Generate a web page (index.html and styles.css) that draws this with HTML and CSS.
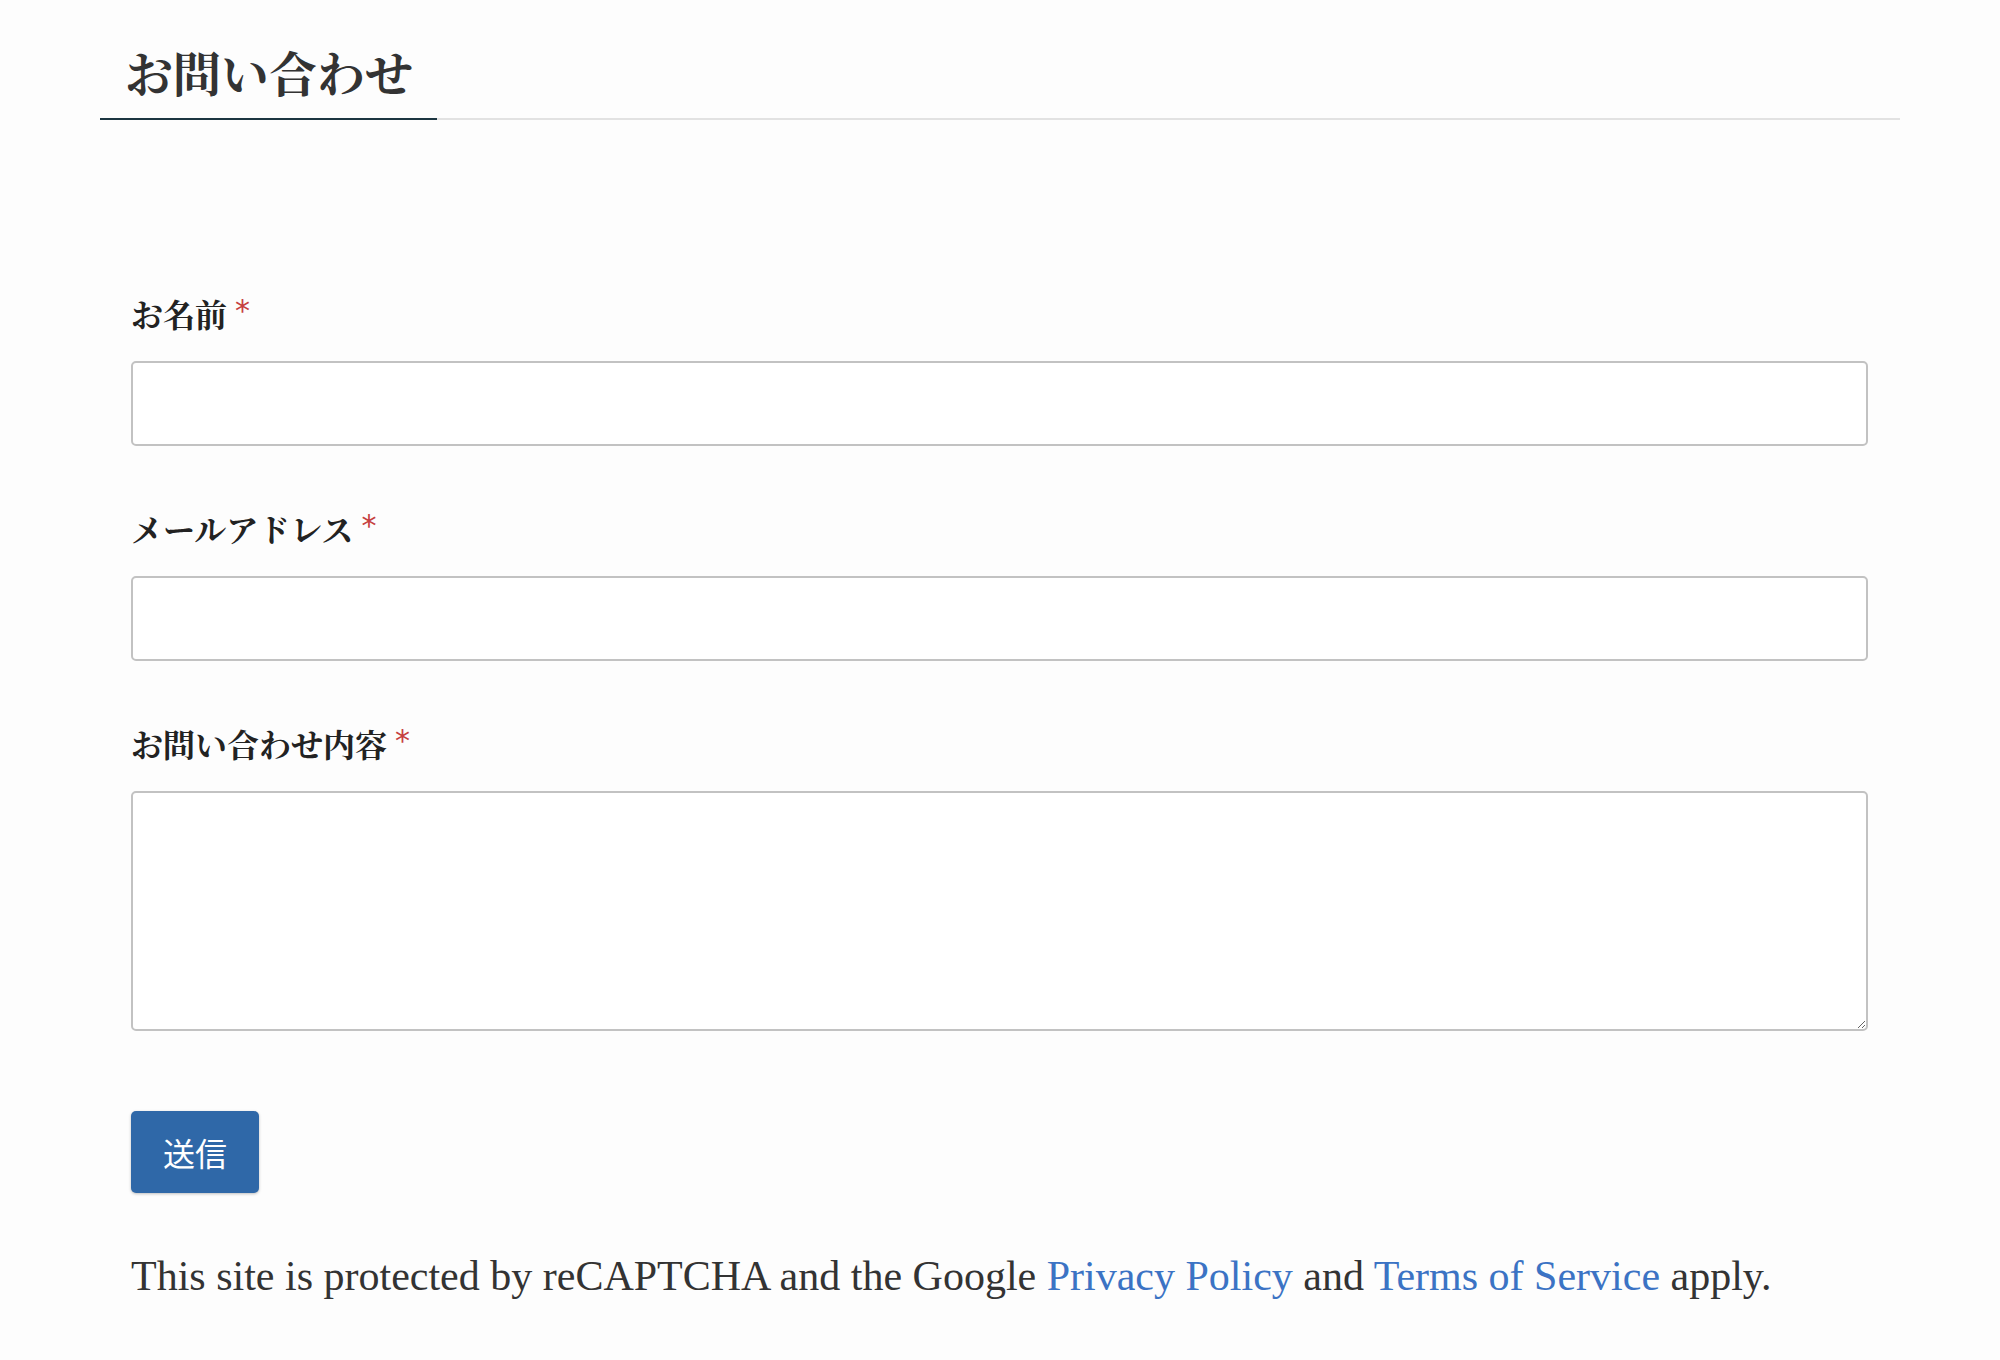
FILE: index.html
```html
<!DOCTYPE html>
<html lang="ja">
<head>
<meta charset="utf-8">
<title>お問い合わせ</title>
<link rel="stylesheet" href="styles.css">
</head>
<body>
<main class="page">
  <div class="title-bar">
    <h1 class="title">お問い合わせ</h1>
  </div>
  <form class="form">
    <div class="field">
      <label class="label" for="name">お名前 <span class="req">*</span></label>
      <input class="input" id="name" type="text">
    </div>
    <div class="field">
      <label class="label" for="email">メールアドレス <span class="req">*</span></label>
      <input class="input" id="email" type="email">
    </div>
    <div class="field">
      <label class="label" for="msg">お問い合わせ内容 <span class="req">*</span></label>
      <textarea class="textarea" id="msg"></textarea>
    </div>
    <button class="submit" type="button">送信</button>
    <p class="notice">This site is protected by reCAPTCHA and the Google <a href="#">Privacy Policy</a> and <a href="#">Terms of Service</a> apply.</p>
  </form>
</main>
</body>
</html>
```
FILE: styles.css
```css
html, body {
  margin: 0;
  padding: 0;
  background: #fdfdfd;
}
body {
  font-family: "Noto Sans CJK JP", "Noto Sans", sans-serif;
  color: #222;
}
.page {
  width: 1800px;
  margin: 0 0 0 100px;
  padding-top: 36px;
}
.title-bar {
  border-bottom: 2px solid #e2e2e2;
  display: flex;
}
.title {
  margin: 0 0 -2px 0;
  padding: 0 24px 10px 25px;
  font-family: "Noto Serif CJK JP", "Noto Sans CJK JP", serif;
  font-size: 48px;
  line-height: 72px;
  font-weight: 700;
  color: #333;
  border-bottom: 2px solid #1c3541;
}
.form {
  padding: 167px 32px 0 31px;
  display: flex;
  flex-direction: column;
}
.field {
  display: flex;
  flex-direction: column;
  margin-bottom: 56px;
}
.field:last-of-type {
  margin-bottom: 80px;
}
.label {
  font-family: "Noto Serif CJK JP", "Noto Sans CJK JP", serif;
  font-size: 32px;
  line-height: 48px;
  font-weight: 700;
  color: #222;
  margin-bottom: 24px;
}
.req {
  font-family: "DejaVu Sans", sans-serif;
  font-weight: 400;
  color: #c64040;
  font-size: 30px;
  vertical-align: 6px;
}
.input, .textarea {
  box-sizing: border-box;
  width: 100%;
  background: #fff;
  border: 2px solid #c2c2c2;
  border-radius: 5px;
  font-size: 30px;
  padding: 10px 16px;
  margin: 0;
  outline: none;
}
.input {
  height: 85px;
}
.textarea {
  height: 240px;
  display: block;
  resize: vertical;
}
.submit {
  align-self: flex-start;
  width: 128px;
  height: 82px;
  padding: 0;
  border: none;
  border-radius: 5px;
  background: #2f68a8;
  color: #fff;
  font-family: "Noto Sans CJK JP", sans-serif;
  font-size: 32px;
  font-weight: 400;
  box-shadow: 0 1px 3px rgba(0, 0, 0, 0.25);
}
.notice {
  margin: 53px 0 0 0;
  font-family: "Liberation Serif", serif;
  font-size: 42px;
  line-height: 60px;
  color: #333;
}
.notice a {
  color: #3b73c4;
  text-decoration: none;
}
```
